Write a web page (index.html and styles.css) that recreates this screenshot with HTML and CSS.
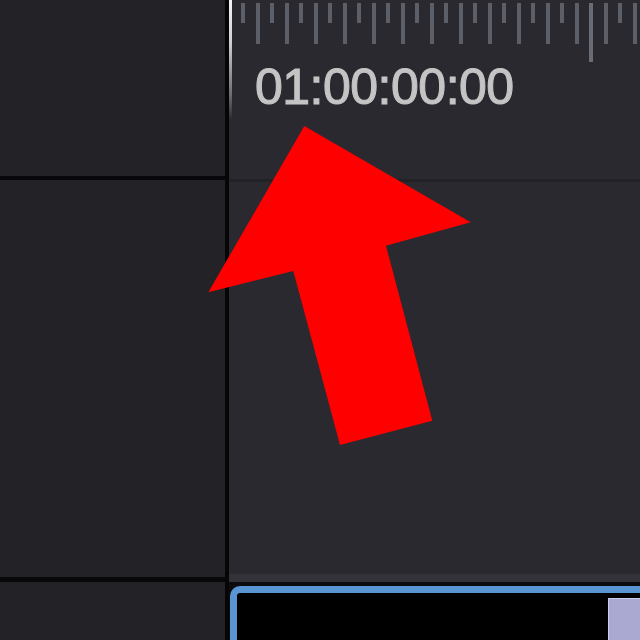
FILE: index.html
```html
<!DOCTYPE html>
<html>
<head>
<meta charset="utf-8">
<link rel="stylesheet" href="styles.css">
</head>
<body>
<div class="app">
  <aside class="side">
    <div class="side-head"></div>
    <div class="side-track"></div>
    <div class="side-foot"></div>
  </aside>
  <div class="divider"></div>
  <main class="timeline">
    <header class="ruler-area">
      <div class="playhead"></div>
      <div class="ruler">
        <span class="tick minor"></span><span class="tick major"></span>
        <span class="tick minor"></span><span class="tick major"></span>
        <span class="tick minor"></span><span class="tick major"></span>
        <span class="tick minor"></span><span class="tick major"></span>
        <span class="tick minor"></span><span class="tick major"></span>
        <span class="tick minor"></span><span class="tick major"></span>
        <span class="tick minor"></span><span class="tick major"></span>
        <span class="tick minor"></span><span class="tick major"></span>
        <span class="tick minor"></span><span class="tick major"></span>
        <span class="tick minor"></span><span class="tick major"></span>
        <span class="tick minor"></span><span class="tick major"></span>
        <span class="tick minor"></span><span class="tick major"></span>
        <span class="tick long"></span><span class="tick major"></span>
        <span class="tick minor"></span><span class="tick major"></span>
      </div>
      <div class="timecode">01:00:00:00</div>
    </header>
    <section class="track"></section>
    <div class="track-edge"></div>
    <div class="clip-row">
      <div class="clip">
        <div class="clip-body"></div>
        <div class="clip-thumb"></div>
      </div>
    </div>
  </main>
</div>
<svg class="arrow" width="640" height="640" viewBox="0 0 640 640">
  <polygon points="304.3,126 470.7,222.3 386,245.7 432.3,420.7 340,445 293.3,271 208.3,292.3" fill="#ff0000"/>
</svg>
</body>
</html>
```
FILE: styles.css
```css
html, body {
  margin: 0;
  padding: 0;
  width: 640px;
  height: 640px;
  overflow: hidden;
  background: #29292f;
  font-family: "Liberation Sans", Arial, sans-serif;
}

.app {
  display: flex;
  width: 640px;
  height: 640px;
}

.side {
  width: 225px;
  flex: 0 0 225px;
  display: flex;
  flex-direction: column;
  background: #222227;
}

.side-head {
  height: 176px;
  border-bottom: 4px solid #08080a;
}

.side-track {
  height: 397px;
  border-bottom: 5px solid #08080a;
}

.side-foot {
  flex: 1;
}

.divider {
  flex: 0 0 4px;
  background: #060608;
}

.timeline {
  flex: 1;
  display: flex;
  flex-direction: column;
  background: #29292f;
  min-width: 0;
  overflow: hidden;
}

.ruler-area {
  position: relative;
  height: 179px;
  border-bottom: 3px solid #222227;
  box-sizing: content-box;
}

.playhead {
  position: absolute;
  left: 0;
  top: 0;
  width: 3px;
  height: 120px;
  background: linear-gradient(to bottom, #f4f4f4 0%, #d0d0d0 35%, #6a6a70 80%, rgba(60, 60, 66, 0) 100%);
}

.ruler {
  display: flex;
  align-items: flex-start;
  height: 62px;
  padding-left: 12px;
  padding-top: 3px;
  box-sizing: border-box;
}

.tick {
  flex: 0 0 14.52px;
  height: 20px;
}

.tick::before {
  content: "";
  display: block;
  width: 4px;
  height: 100%;
  background: #5c5f68;
}

.tick.major {
  height: 41px;
}

.tick.long {
  height: 59px;
}

.tick.long::before {
  background: #696c75;
}

.timecode {
  padding-left: 26px;
  font-size: 50px;
  line-height: 50px;
  letter-spacing: -0.5px;
  color: #c4c4c4;
  -webkit-text-stroke: 1.1px #c4c4c4;
  white-space: nowrap;
}

.track {
  height: 392px;
}

.track-edge {
  height: 8px;
  background: #323238;
  border-bottom: 4px solid #0c0c0e;
}

.clip-row {
  flex: 1;
  display: flex;
  background: #0c0c0e;
  padding-left: 1px;
}

.clip {
  flex: 1;
  display: flex;
  border: 7px solid #5895d2;
  border-right: none;
  border-bottom: none;
  border-top-left-radius: 10px;
  background: #000;
  padding-top: 5px;
}

.clip-body {
  width: 371px;
}

.clip-thumb {
  flex: 1;
  background: #aaa9d2;
  border-top: 1px solid #cbcbec;
  border-left: 1px solid #cbcbec;
}

.arrow {
  position: absolute;
  left: 0;
  top: 0;
  pointer-events: none;
}
```
